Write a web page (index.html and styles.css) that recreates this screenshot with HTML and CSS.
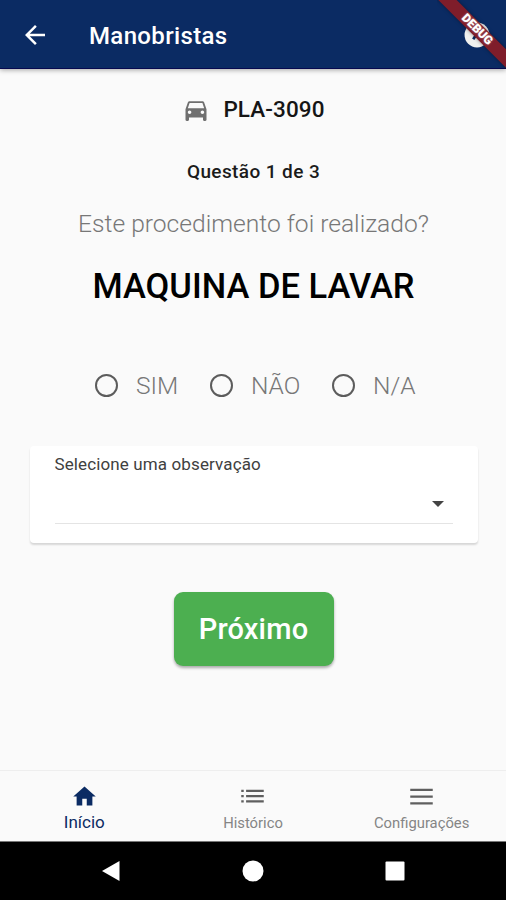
FILE: index.html
```html
<!DOCTYPE html>
<html lang="pt-BR">
<head>
<meta charset="utf-8">
<meta name="viewport" content="width=device-width, initial-scale=1">
<title>Manobristas</title>
<link rel="stylesheet" href="styles.css">
</head>
<body>
<div class="app">
  <header class="bar">
    <svg class="back" viewBox="0 0 24 24"><path d="M20 11H7.830l5.590-5.590L12 4l-8 8 8 8 1.410-1.410L7.830 13H20z"/></svg>
    <h1 class="title"><span>Manobristas</span></h1>
    <svg class="clock" viewBox="0 0 24 24"><circle cx="12" cy="12" r="11.500" fill="#f1f1ef"/><path d="M10.500 7v6l-2 3" fill="none" stroke="#0b2b63" stroke-width="2.500"/></svg>
  </header>
  <div class="debug"><span class="ribbon">DEBUG</span></div>
  <main class="content">
    <div class="plate">
      <svg class="car" viewBox="0 0 24 24"><path d="M18.92 5.01C18.72 4.42 18.16 4 17.5 4h-11c-.66 0-1.21.42-1.42 1.01L3 11v9c0 .55.45 1 1 1h1c.55 0 1-.45 1-1v-2h12v2c0 .55.45 1 1 1h1c.55 0 1-.45 1-1v-9l-2.08-5.99zM6.5 15c-.83 0-1.5-.67-1.5-1.5S5.67 12 6.5 12s1.5.67 1.5 1.5S7.33 15 6.5 15zm11 0c-.83 0-1.5-.67-1.5-1.5s.67-1.5 1.5-1.5 1.5.67 1.5 1.5-.67 1.5-1.5 1.5zM5 10l1.500-4.500h11L19 10H5z"/></svg>
      <span class="plate-id">PLA-3090</span>
    </div>
    <p class="step"><span>Questão 1 de 3</span></p>
    <p class="ask"><span>Este procedimento foi realizado?</span></p>
    <h2 class="item"><span>MAQUINA DE LAVAR</span></h2>
    <div class="options">
      <label class="option sim"><i class="radio"></i><span>SIM</span></label>
      <label class="option nao"><i class="radio"></i><span>NÃO</span></label>
      <label class="option na"><i class="radio"></i><span>N/A</span></label>
    </div>
    <section class="card">
      <span class="card-label">Selecione uma observação</span>
      <div class="select"><i class="caret"></i></div>
    </section>
    <button class="next"><span>Próximo</span></button>
  </main>
  <nav class="tabs">
    <a class="tab active"><svg viewBox="0 0 24 24"><path d="M10 20v-6h4v6h5v-8h3L12 3 2 12h3v8z"/></svg><span>Início</span></a>
    <a class="tab"><svg viewBox="0 0 24 24"><path d="M2 6h2.200v2H2zm0 4.700h2.200v2H2zm0 4.700h2.200v2H2zM6.300 6H22v2H6.300zm0 4.700H22v2H6.300zm0 4.700H22v2H6.300z"/></svg><span>Histórico</span></a>
    <a class="tab"><svg viewBox="0 0 24 24"><path d="M2 5h20v2H2zm0 6h20v2H2zm0 6h20v2H2z"/></svg><span>Configurações</span></a>
  </nav>
  <footer class="system">
    <svg viewBox="0 0 24 24"><path d="M20.500 2v20L3 12z"/></svg>
    <svg viewBox="0 0 24 24"><circle cx="12" cy="12" r="10.500"/></svg>
    <svg viewBox="0 0 24 24"><rect x="2.500" y="2.500" width="19" height="19" rx="1"/></svg>
  </footer>
</div>
</body>
</html>
```
FILE: styles.css
```css
* { box-sizing: border-box; }
body { margin: 0; font-family: Roboto, sans-serif; background: #fafafa; }
h1, h2, p { margin: 0; }
svg { display: block; flex: none; }
.app { position: relative; width: 506px; height: 900px; display: flex; flex-direction: column; overflow: hidden; background: #fafafa; }

.bar { height: 69px; flex: none; display: flex; align-items: center; padding: 2px 16px 0 20px; background: #0b2b63; border-bottom: 1px solid #07094f; box-shadow: 0 1px 5px rgba(0,0,0,.35); color: #fff; z-index: 1; }
.back { width: 30px; height: 30px; fill: #fff; }
.title { flex: 1; margin-left: 39px; padding-top: 2px; font-size: 24px; letter-spacing: .35px; line-height: 30px; font-weight: 500; }
.clock { width: 26px; height: 26px; }
.debug { position: absolute; top: 0; right: 0; width: 69px; height: 69px; overflow: hidden; z-index: 2; }
.ribbon { position: absolute; left: -20px; top: 23px; width: 120px; height: 13px; background: #7f1d2a; transform: rotate(45deg); color: #fff; font-size: 12px; line-height: 13px; font-weight: 900; text-align: center; text-shadow: 0 0 2px #fff8; box-shadow: 0 0 4px #0006; }

.content { flex: 1; display: flex; flex-direction: column; align-items: center; padding-left: 1px; }
.plate { display: flex; align-items: center; gap: 13px; height: 30px; margin-top: 25px; }
.car { width: 28px; height: 29px; margin-top: 2px; fill: #6f6f6f; }
.plate-id { font-size: 22.500px; letter-spacing: .1px; line-height: 30px; font-weight: 500; color: #151515; }
.step { margin-top: 36px; font-size: 19px; letter-spacing: .4px; line-height: 24px; font-weight: 500; color: #1b1b1b; }
.ask { margin-top: 24px; font-size: 24.600px; line-height: 32px; font-weight: 300; color: #777; }
.item { margin-top: 24px; font-size: 34.500px; line-height: 44px; font-weight: 500; color: #000; }
.options { align-self: stretch; display: flex; margin-top: 61px; padding-left: 94px; height: 32px; }
.option { display: flex; align-items: center; gap: 18px; font-size: 24.500px; font-weight: 300; color: #777; }
.sim { width: 115px; }
.nao { width: 122px; }
.radio { width: 23px; height: 23px; border: 2.500px solid #5c5c5c; border-radius: 50%; flex: none; }
.card { width: 448px; height: 97px; margin-top: 45px; padding: 8px 25px 0 25px; background: #fff; border-radius: 4px; box-shadow: 0 2px 2px rgba(0,0,0,.14); }
.card-label { display: block; font-size: 17px; letter-spacing: .12px; line-height: 20px; color: #404040; }
.select { display: flex; justify-content: flex-end; align-items: center; height: 50px; padding: 10px 9px 0 0; border-bottom: 1px solid #e4e4e4; }
.caret { border: 6px solid transparent; border-top-color: #444; border-bottom: 0; }
.next { width: 160px; height: 74px; margin-top: 49px; padding: 0; border: 0; border-radius: 9px; background: #4caf50; box-shadow: 0 2px 3px rgba(0,0,0,.32); color: #fff; font-family: inherit; font-size: 29px; letter-spacing: .2px; font-weight: 500; }

.tabs { height: 71px; flex: none; display: grid; grid-template-columns: repeat(3, 1fr); border-top: 1px solid #eee; background: #fafafa; }
.tab { display: flex; flex-direction: column; align-items: center; padding-top: 12px; font-size: 14.800px; line-height: 20px; color: #858585; }
.tab svg { width: 27px; height: 27px; fill: #5f5f5f; }
.tab span { margin-top: 3px; }
.tab.active { font-size: 17px; color: #0b2b63; }
.tab.active svg { fill: #0b2b63; }
.tab.active span { margin-top: 2px; }
.system { height: 59px; flex: none; display: flex; justify-content: center; gap: 118px; padding-top: 17px; background: #000; border-top: 1px solid #777; }
.system svg { width: 24px; height: 24px; fill: #fff; }
```
